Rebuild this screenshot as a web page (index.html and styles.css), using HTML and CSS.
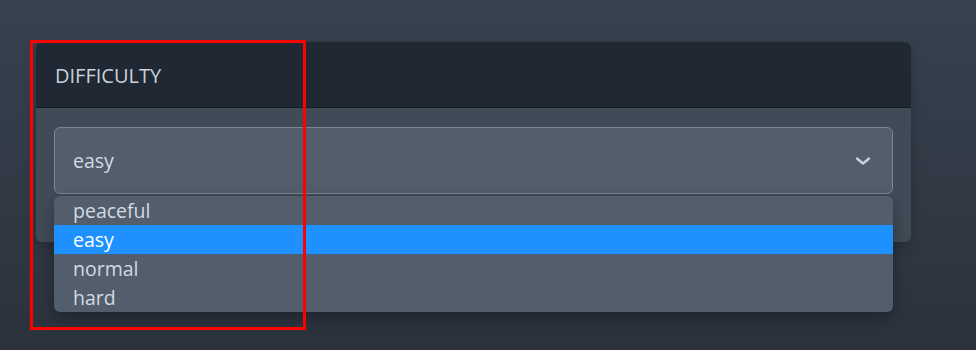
FILE: index.html
```html
<!DOCTYPE html>
<html lang="en">
<head>
    <meta charset="UTF-8">
    <meta name="viewport" content="width=device-width, initial-scale=1.0">
    <title>Difficulty</title>
    <link rel="stylesheet" href="styles.css">
</head>
<body>
    <div class="page">
        <div class="card">
            <div class="card-header">DIFFICULTY</div>
            <div class="card-body">
                <div class="select-wrap">
                    <div class="select">
                        <span class="select-value">easy</span>
                        <svg class="chevron" width="16" height="10" viewBox="0 0 16 10">
                            <path d="M2 2.5 L8 7.5 L14 2.5" fill="none" stroke="#c8d3de" stroke-width="2.4" stroke-linecap="round" stroke-linejoin="round"/>
                        </svg>
                    </div>
                    <ul class="options">
                        <li class="option">peaceful</li>
                        <li class="option selected">easy</li>
                        <li class="option">normal</li>
                        <li class="option">hard</li>
                    </ul>
                </div>
            </div>
        </div>
        <div class="highlight-box"></div>
    </div>
</body>
</html>
```

FILE: styles.css
```css
body {
    margin: 0;
    font-family: "Open Sans", "Noto Sans", sans-serif;
    background: linear-gradient(to bottom, #37424f, #2b323c);
    min-height: 350px;
}

.page {
    position: relative;
    padding: 42px 0 0 36px;
    height: 308px;
}

.card {
    width: 875px;
    border-radius: 6px;
    background: #414b57;
    box-shadow: 0 4px 14px rgba(0, 0, 0, 0.2);
}

.card-header {
    background: #1f2833;
    border-radius: 6px 6px 0 0;
    border-bottom: 1px solid #161c24;
    height: 65px;
    line-height: 68px;
    padding-left: 19px;
    font-size: 20px;
    color: #c9d2dc;
}

.card-body {
    padding: 19px 18px 48px;
    border-radius: 0 0 6px 6px;
}

.select-wrap {
    position: relative;
}

.select {
    height: 65px;
    border: 1px solid #7c8793;
    border-radius: 6px;
    background: #525e6b;
    display: flex;
    align-items: center;
    justify-content: space-between;
    padding: 0 21px 0 18px;
}

.select-value {
    font-size: 19.5px;
    color: #d2dae2;
}

.chevron {
    display: block;
}

.options {
    position: absolute;
    top: 69px;
    left: 0;
    right: 0;
    margin: 0;
    padding: 0;
    list-style: none;
    background: #525e6b;
    border-radius: 6px;
    overflow: hidden;
    box-shadow: 0 6px 16px rgba(0, 0, 0, 0.3);
}

.option {
    height: 29px;
    line-height: 30px;
    padding-left: 19px;
    font-size: 19.5px;
    color: #d2dae2;
}

.option.selected {
    background: #1e90ff;
    color: #ffffff;
}

.highlight-box {
    position: absolute;
    left: 30px;
    top: 40px;
    width: 270px;
    height: 284px;
    border: 3px solid #ff0000;
}
```
